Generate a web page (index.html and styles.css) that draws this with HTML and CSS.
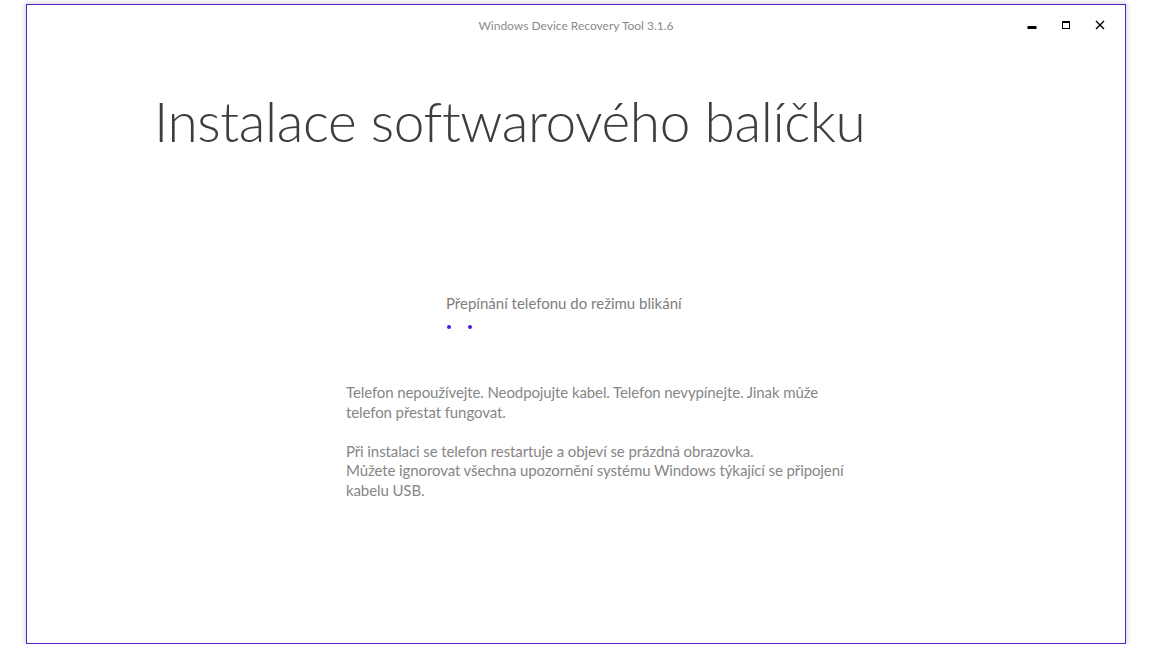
FILE: index.html
```html
<!DOCTYPE html>
<html lang="cs">
<head>
<meta charset="utf-8">
<title>Windows Device Recovery Tool</title>
<link rel="stylesheet" href="styles.css">
</head>
<body>
<div class="window">
  <header class="titlebar">
    <div></div>
    <div class="app-title">Windows Device Recovery Tool 3.1.6</div>
    <div class="controls">
      <span class="ctl"><svg width="10" height="10" viewBox="0 0 10 10"><rect x="0.5" y="6" width="9" height="3" fill="#000"/></svg></span>
      <span class="ctl"><svg width="10" height="10" viewBox="0 0 10 10"><rect x="1.5" y="1.5" width="7" height="7" fill="none" stroke="#000" stroke-width="1"/><rect x="1" y="1" width="8" height="2" fill="#000"/></svg></span>
      <span class="ctl"><svg width="10" height="10" viewBox="0 0 10 10"><path d="M1 1 L9 9 M9 1 L1 9" stroke="#000" stroke-width="1.4" fill="none"/></svg></span>
    </div>
  </header>
  <main class="content">
    <h1 class="heading">Instalace softwarového balíčku</h1>
    <section class="status">
      <div class="status-text">Přepínání telefonu do režimu blikání</div>
      <div class="dots"><span class="dot"></span><span class="dot"></span></div>
    </section>
    <section class="notes">
      <p>Telefon nepoužívejte. Neodpojujte kabel. Telefon nevypínejte. Jinak může<br>telefon přestat fungovat.</p>
      <p>Při instalaci se telefon restartuje a objeví se prázdná obrazovka.<br>Můžete ignorovat všechna upozornění systému Windows týkající se připojení<br>kabelu USB.</p>
    </section>
  </main>
</div>
</body>
</html>
```
FILE: styles.css
```css
html, body {
  margin: 0;
  padding: 0;
  background: #ffffff;
}
body {
  font-family: Lato, "Open Sans", sans-serif;
  padding: 4px 0 0 26px;
}
.window {
  box-sizing: border-box;
  width: 1100px;
  height: 640px;
  border: 1px solid #5a1ed2;
  background: #fff;
  box-shadow: 0 0 5px 1px rgba(0,0,0,0.18);
  display: flex;
  flex-direction: column;
}
.titlebar {
  height: 40px;
  display: grid;
  grid-template-columns: 1fr auto 1fr;
  align-items: center;
}
.app-title {
  font-size: 12px;
  color: #8a8a8a;
  padding-top: 1px;
}
.controls {
  display: flex;
  justify-content: flex-end;
  padding-right: 8px;
}
.ctl {
  width: 34px;
  height: 40px;
  display: flex;
  align-items: center;
  justify-content: center;
}
.content {
  padding-left: 127px;
}
.heading {
  margin: 40px 0 0 0;
  font-weight: 300;
  font-size: 55px;
  letter-spacing: -0.4px;
  line-height: 72px;
  color: #3d3d3d;
}
.status {
  margin: 136px 0 0 292px;
}
.status-text {
  font-size: 15px;
  color: #7e7e7e;
  line-height: 20px;
}
.dots {
  display: flex;
  gap: 17px;
  margin: 12px 0 0 1px;
}
.dot {
  width: 4px;
  height: 4px;
  border-radius: 50%;
  background: #5312f0;
}
.notes {
  margin: 54px 0 0 192px;
  font-size: 15px;
  letter-spacing: -0.1px;
  line-height: 19.5px;
  color: #868686;
}
.notes p {
  margin: 0 0 19.5px 0;
}
```
